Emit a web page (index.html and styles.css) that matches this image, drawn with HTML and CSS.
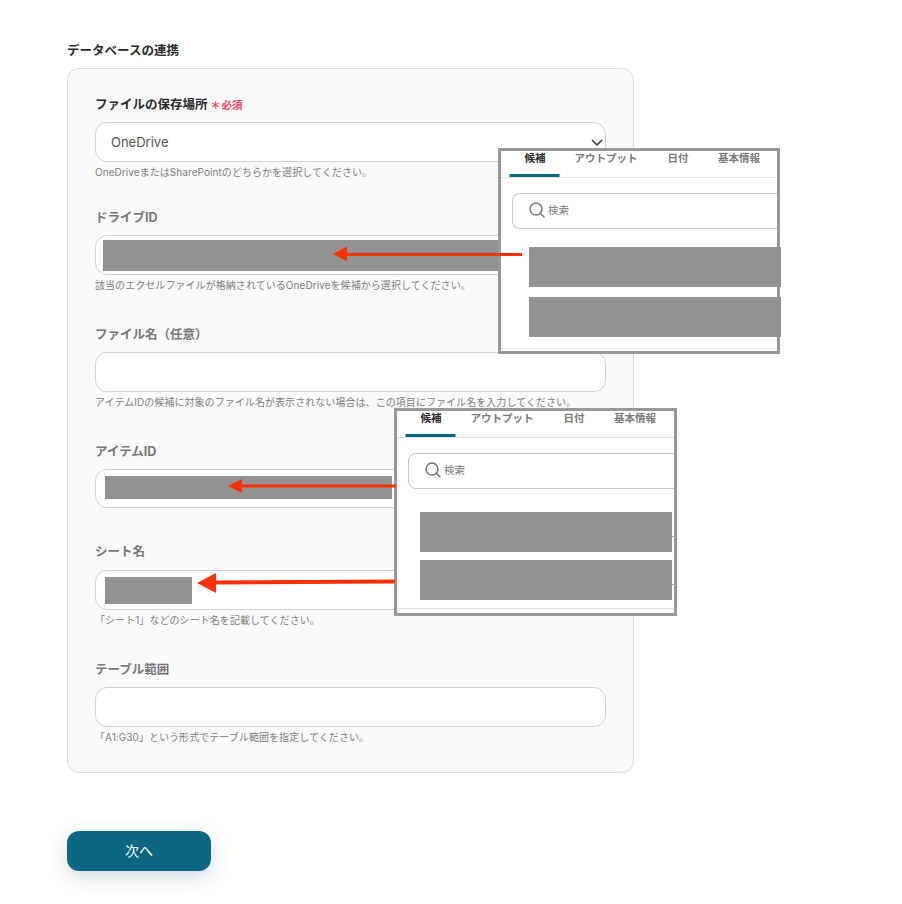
FILE: index.html
```html
<!DOCTYPE html>
<html lang="ja">
<head>
<meta charset="utf-8">
<title>データベースの連携</title>
<link rel="stylesheet" href="styles.css">
</head>
<body>
<main class="page">
  <h2 class="title">データベースの連携</h2>
  <section class="card">
    <div class="field field-first">
      <label class="label label-strong">ファイルの保存場所<span class="req"><span class="star">＊</span>必須</span></label>
      <div class="input input-select"><span>OneDrive</span>
        <svg class="chevron" width="12" height="8" viewBox="0 0 12 8"><path d="M1.500 1.500 6 6l4.500-4.500" fill="none" stroke="#444" stroke-width="1.700" stroke-linecap="round" stroke-linejoin="round"/></svg>
      </div>
      <p class="hint">OneDriveまたはSharePointのどちらかを選択してください。</p>
    </div>
    <div class="field">
      <label class="label">ドライブID</label>
      <div class="input input-tight"><span class="mask mask-drive"></span></div>
      <p class="hint">該当のエクセルファイルが格納されているOneDriveを候補から選択してください。</p>
    </div>
    <div class="field">
      <label class="label">ファイル名（任意）</label>
      <div class="input"></div>
      <p class="hint">アイテムIDの候補に対象のファイル名が表示されない場合は、この項目にファイル名を入力してください。</p>
    </div>
    <div class="field field-nohint">
      <label class="label">アイテムID</label>
      <div class="input input-short"><span class="mask mask-item"></span></div>
    </div>
    <div class="field field-sheet">
      <label class="label">シート名</label>
      <div class="input"><span class="mask mask-sheet"></span></div>
      <p class="hint">「シート1」などのシート名を記載してください。</p>
    </div>
    <div class="field field-last">
      <label class="label">テーブル範囲</label>
      <div class="input"></div>
      <p class="hint">「A1:G30」という形式でテーブル範囲を指定してください。</p>
    </div>
  </section>
  <button class="next" type="button">次へ</button>
</main>

<aside class="shot shot-a">
  <div class="tabs">
    <span class="tab tab-on">候補</span><span class="tab tab-out">アウトプット</span><span class="tab tab-date">日付</span><span class="tab tab-info">基本情報</span>
  </div>
  <div class="search">
    <svg width="18" height="18" viewBox="0 0 18 18"><circle cx="8" cy="8" r="6" fill="none" stroke="#777" stroke-width="1.500"/><path d="m12.500 12.500 3.500 3.500" stroke="#777" stroke-width="1.500" stroke-linecap="round"/></svg>
    <span class="search-text">検索</span>
  </div>
  <div class="block block-a1"></div>
  <div class="block block-a2"></div>
  <div class="foot"></div>
</aside>

<aside class="shot shot-b">
  <div class="tabs">
    <span class="tab tab-on">候補</span><span class="tab tab-out">アウトプット</span><span class="tab tab-date">日付</span><span class="tab tab-info">基本情報</span>
  </div>
  <div class="search">
    <svg width="18" height="18" viewBox="0 0 18 18"><circle cx="8" cy="8" r="6" fill="none" stroke="#777" stroke-width="1.500"/><path d="m12.500 12.500 3.500 3.500" stroke="#777" stroke-width="1.500" stroke-linecap="round"/></svg>
    <span class="search-text">検索</span>
  </div>
  <div class="block block-b1"></div>
  <div class="block block-b2"></div>
  <div class="foot"></div>
</aside>

<svg class="arrows" width="902" height="904" viewBox="0 0 902 904">
  <path d="M522 254.500H346" stroke="#ff3008" stroke-width="3" fill="none"/>
  <path d="M333 254 347 246.500V261.500Z" fill="#ff3008"/>
  <path d="M396 486H241" stroke="#ff3008" stroke-width="3" fill="none"/>
  <path d="M228 486 242 479V493Z" fill="#ff3008"/>
  <path d="M395 581.500 214 582.500" stroke="#ff3008" stroke-width="4" fill="none"/>
  <path d="M197 583 216 573V593Z" fill="#ff3008"/>
</svg>
</body>
</html>
```
FILE: styles.css
```css
* { box-sizing: border-box; }
html, body { margin: 0; padding: 0; background: #fff; }
body {
  position: relative;
  width: 902px;
  height: 904px;
  overflow: hidden;
  font-family: "Inter", "Noto Sans CJK JP", sans-serif;
  color: #333;
}
.page { padding: 42px 0 0 67px; }
.title {
  margin: 0 0 8px;
  font-size: 12.500px;
  line-height: 18px;
  font-weight: 700;
  color: #2b2b2b;
}
.card {
  width: 567px;
  padding: 25px 27px 28px;
  background: #fafafa;
  border: 1px solid #dcdde3;
  border-radius: 12px;
}
.field { margin-bottom: 32px; }
.field-first { margin-bottom: 28px; }
.field-nohint { margin-bottom: 33px; }
.field-last { margin-bottom: 0; }
.label {
  display: block;
  height: 20px;
  margin-bottom: 8px;
  padding-top: 1px;
  font-size: 12.500px;
  line-height: 20px;
  font-weight: 700;
  color: #777;
}
.field-sheet .label { margin-bottom: 9px; }
.label-strong { color: #2b2b2b; }
.req {
  margin-left: 3px;
  font-size: 10.500px;
  font-weight: 700;
  color: #f6425f;
}
.star { margin-right: 1px; font-size: 10px; }
.input {
  display: flex;
  align-items: center;
  height: 40px;
  padding: 0 9px;
  background: #fff;
  border: 1px solid #d0d2da;
  border-radius: 12px;
}
.input-select {
  justify-content: space-between;
  padding: 0 2px 0 15px;
  font-size: 13px;
  color: #555;
}
.input-tight { padding: 0 7px; }
.input-short { height: 39px; }
.chevron { margin-top: 2px; }
.mask { display: block; background: #929292; }
.mask-drive { width: 396px; height: 31px; margin-top: 1px; }
.mask-item { width: 287px; height: 23px; margin-top: -2px; }
.mask-sheet { width: 87px; height: 27px; }
.hint {
  margin: 3px 0 0;
  font-size: 10px;
  line-height: 14px;
  letter-spacing: .06px;
  color: #808080;
}
.next {
  display: block;
  width: 144px;
  height: 40px;
  margin: 58px 0 0;
  padding: 0;
  border: 0;
  border-radius: 12px;
  background: #0b6880;
  color: #fff;
  font: 400 14px/40px "Inter", "Noto Sans CJK JP", sans-serif;
  box-shadow: 0 6px 20px rgba(40, 70, 90, .2);
}
.shot {
  position: absolute;
  background: #fff;
  border: 3px solid #999;
}
.shot-a { left: 498px; top: 148px; width: 282px; height: 206px; }
.shot-b { left: 394px; top: 408px; width: 283px; height: 208px; }
.tabs {
  position: relative;
  height: 27px;
  border-bottom: 1px solid #e2e3e8;
  font-size: 10.500px;
  font-weight: 700;
  line-height: 14px;
  color: #7b7b7b;
}
.tab { position: absolute; top: 1px; transform: translateX(-50%); white-space: nowrap; }
.tab-on { left: 34px; color: #2b2b2b; }
.tab-on::after {
  content: "";
  position: absolute;
  left: -15px;
  top: 22px;
  width: 50px;
  height: 3px;
  background: #0b6880;
}
.tab-out { left: 105px; }
.tab-date { left: 177px; }
.tab-info { left: 238px; }
.search {
  position: absolute;
  left: 11px;
  top: 42px;
  right: 0;
  height: 36px;
  display: flex;
  align-items: center;
  gap: 2px;
  padding: 0 0 2px 15px;
  background: #fff;
  border: 1px solid #c9c9c9;
  border-right: 0;
  border-radius: 8px 0 0 8px;
  font-size: 10.500px;
  color: #777;
}
.search-text { margin-bottom: 1px; }
.block { position: absolute; background: #929292; }
.block-a1 { left: 28px; top: 96px; width: 252px; height: 40px; }
.block-a2 { left: 28px; top: 146px; width: 252px; height: 40px; }
.block-b1 { left: 23px; top: 101px; width: 252px; height: 40px; }
.block-b2 { left: 23px; top: 149px; width: 252px; height: 40px; }
.block-b1::after, .block-b2::after {
  content: "";
  position: absolute;
  left: 100%;
  top: 24px;
  width: 3px;
  height: 1px;
  background: #aaa;
}
.foot { position: absolute; left: 0; right: 0; top: 197px; height: 1px; background: #e2e3e8; }
.arrows { position: absolute; left: 0; top: 0; pointer-events: none; }
```
